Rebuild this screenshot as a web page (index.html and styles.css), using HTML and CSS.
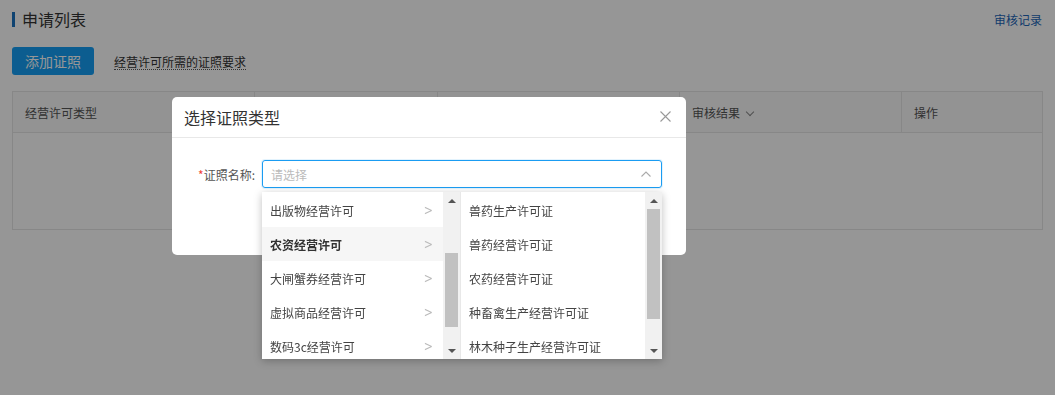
FILE: index.html
```html
<!DOCTYPE html>
<html lang="zh-CN">
<head>
  <meta charset="UTF-8" />
  <meta name="viewport" content="width=device-width, initial-scale=1.0"/>
  <title>申请列表</title>
  <link rel="stylesheet" href="styles.css">
</head>
<body>
  <div class="page">
    <div class="page-head">
      <h2 class="page-title">申请列表</h2>
      <a class="head-link" href="#">审核记录</a>
    </div>

    <div class="toolbar">
      <button class="primary-btn">添加证照</button>
      <a class="hint-link" href="#">经营许可所需的证照要求</a>
    </div>

    <table class="list-table">
      <thead>
        <tr>
          <th class="col-type">经营许可类型</th>
          <th class="col-name"></th>
          <th class="col-time"></th>
          <th class="col-result">审核结果 <span class="th-caret"></span></th>
          <th class="col-op">操作</th>
        </tr>
      </thead>
      <tbody>
        <tr class="empty-row"><td colspan="5"></td></tr>
      </tbody>
    </table>
  </div>

  <div class="mask"></div>

  <div class="modal">
    <div class="modal-head">
      <span class="modal-title">选择证照类型</span>
      <span class="modal-close">
        <svg width="11" height="11" viewBox="0 0 11 11"><path d="M0.5 0.5L10.5 10.5M10.5 0.5L0.5 10.5" stroke="#999" stroke-width="1.1" fill="none"/></svg>
      </span>
    </div>
    <div class="modal-body">
      <div class="form-row">
        <label class="form-label"><span class="required">*</span>证照名称:</label>
        <div class="select open">
          <span class="select-placeholder">请选择</span>
          <svg class="select-arrow" width="10" height="6" viewBox="0 0 10 6"><path d="M0.5 5.5L5 1L9.5 5.5" stroke="#aaa" stroke-width="1.1" fill="none"/></svg>
        </div>
      </div>
    </div>
  </div>

  <div class="cascader">
    <div class="cascader-col first">
      <ul class="cascader-list">
        <li class="cascader-item">出版物经营许可<span class="item-arrow">&gt;</span></li>
        <li class="cascader-item active">农资经营许可<span class="item-arrow">&gt;</span></li>
        <li class="cascader-item">大闸蟹券经营许可<span class="item-arrow">&gt;</span></li>
        <li class="cascader-item">虚拟商品经营许可<span class="item-arrow">&gt;</span></li>
        <li class="cascader-item">数码3c经营许可<span class="item-arrow">&gt;</span></li>
      </ul>
      <div class="scrollbar">
        <span class="scroll-btn up"></span>
        <div class="scroll-track"><div class="scroll-thumb" style="margin-top: 44px; height: 74px;"></div></div>
        <span class="scroll-btn down"></span>
      </div>
    </div>
    <div class="cascader-col second">
      <ul class="cascader-list">
        <li class="cascader-item">兽药生产许可证</li>
        <li class="cascader-item">兽药经营许可证</li>
        <li class="cascader-item">农药经营许可证</li>
        <li class="cascader-item">种畜禽生产经营许可证</li>
        <li class="cascader-item">林木种子生产经营许可证</li>
      </ul>
      <div class="scrollbar">
        <span class="scroll-btn up"></span>
        <div class="scroll-track"><div class="scroll-thumb" style="margin-top: 0; height: 110px;"></div></div>
        <span class="scroll-btn down"></span>
      </div>
    </div>
  </div>
</body>
</html>
```

FILE: styles.css
```css
* {
  box-sizing: border-box;
}

body {
  margin: 0;
  background: #fff;
  color: #333;
  font-family: "Noto Sans CJK SC", "Noto Sans", sans-serif;
  font-size: 12px;
}

.page {
  padding: 10px 12px;
}

.page-head {
  display: flex;
  justify-content: space-between;
  align-items: center;
  height: 18px;
}

.page-title {
  margin: 0;
  padding-left: 7px;
  border-left: 3px solid #1a73c0;
  font-size: 16px;
  font-weight: normal;
  line-height: 15px;
  color: #333;
}

.head-link {
  color: #2266b8;
  text-decoration: none;
  font-size: 12px;
  margin-right: 1px;
}

.toolbar {
  display: flex;
  align-items: center;
  gap: 20px;
  margin-top: 19px;
}

.primary-btn {
  width: 82px;
  height: 28px;
  border: none;
  border-radius: 3px;
  background: #159ff5;
  color: #fff;
  font-family: inherit;
  font-size: 14px;
  cursor: pointer;
}

.hint-link {
  color: #333;
  text-decoration: none;
  border-bottom: 1px dotted #555;
  line-height: 15px;
  margin-top: 2px;
}

.list-table {
  width: 100%;
  margin-top: 16px;
  border-collapse: collapse;
  border: 1px solid #e6e6e6;
}

.list-table th {
  height: 41px;
  padding: 0 12px;
  text-align: left;
  font-weight: normal;
  color: #555;
  background: #fafafa;
  border: 1px solid #e6e6e6;
}

.col-type { width: 242px; }
.col-name { width: 183px; }
.col-time { width: 242px; }
.col-result { width: 222px; }

.th-caret {
  display: inline-block;
  width: 6px;
  height: 6px;
  margin-left: 4px;
  border-right: 1px solid #888;
  border-bottom: 1px solid #888;
  transform: translateY(-3px) rotate(45deg);
}

.empty-row td {
  height: 97px;
}

.mask {
  position: fixed;
  inset: 0;
  background: rgba(0, 0, 0, 0.41);
}

.modal {
  position: absolute;
  left: 172px;
  top: 97px;
  width: 514px;
  height: 158px;
  background: #fff;
  border-radius: 5px;
}

.modal-head {
  display: flex;
  justify-content: space-between;
  align-items: center;
  height: 41px;
  padding: 0 15px 1px 12px;
  border-bottom: 1px solid #e8e8e8;
}

.modal-title {
  font-size: 16px;
  color: #333;
}

.modal-close {
  display: flex;
  cursor: pointer;
}

.modal-body {
  padding: 22px 24px 0 12px;
}

.form-row {
  display: flex;
  align-items: center;
  gap: 7px;
}

.form-label {
  width: 71px;
  text-align: right;
  color: #555;
}

.required {
  color: #f04134;
}

.select {
  display: flex;
  align-items: center;
  justify-content: space-between;
  width: 400px;
  height: 28px;
  padding: 0 10px 0 8px;
  border: 1px solid #ccc;
  border-radius: 3px;
}

.select.open {
  border-color: #1a9cf2;
  box-shadow: 0 0 0 1px rgba(26, 156, 242, 0.12);
}

.select-placeholder {
  color: #bbb;
}

.cascader {
  position: absolute;
  left: 262px;
  top: 192px;
  width: 400px;
  height: 167px;
  display: flex;
  background: #fff;
  box-shadow: 0 2px 8px rgba(0, 0, 0, 0.25);
}

.cascader-col {
  display: flex;
  height: 100%;
  overflow: hidden;
}

.cascader-col.first {
  width: 199px;
  border-right: 1px solid #e8e8e8;
}

.cascader-col.second {
  width: 201px;
}

.cascader-list {
  flex: 1;
  margin: 0;
  padding: 1px 0 0;
  list-style: none;
  overflow: hidden;
}

.cascader-item {
  display: flex;
  justify-content: space-between;
  align-items: center;
  height: 34px;
  padding: 0 10px 0 8px;
  color: #444;
  white-space: nowrap;
}

.cascader-item.active {
  background: #f6f6f6;
  font-weight: bold;
  color: #333;
}

.item-arrow {
  color: #bbb;
  font-weight: normal;
  font-family: "DejaVu Sans", sans-serif;
  font-size: 11px;
  transform: scaleY(1.2);
}

.scrollbar {
  display: flex;
  flex-direction: column;
  width: 17px;
  background: #f1f1f1;
}

.scroll-btn {
  height: 17px;
  display: flex;
  align-items: center;
  justify-content: center;
}

.scroll-btn::before {
  content: "";
  border-left: 4px solid transparent;
  border-right: 4px solid transparent;
}

.scroll-btn.up::before {
  border-bottom: 4px solid #555;
}

.scroll-btn.down::before {
  border-top: 4px solid #555;
}

.scroll-track {
  flex: 1;
  padding: 0 2px;
}

.scroll-thumb {
  background: #c1c1c1;
}
```
